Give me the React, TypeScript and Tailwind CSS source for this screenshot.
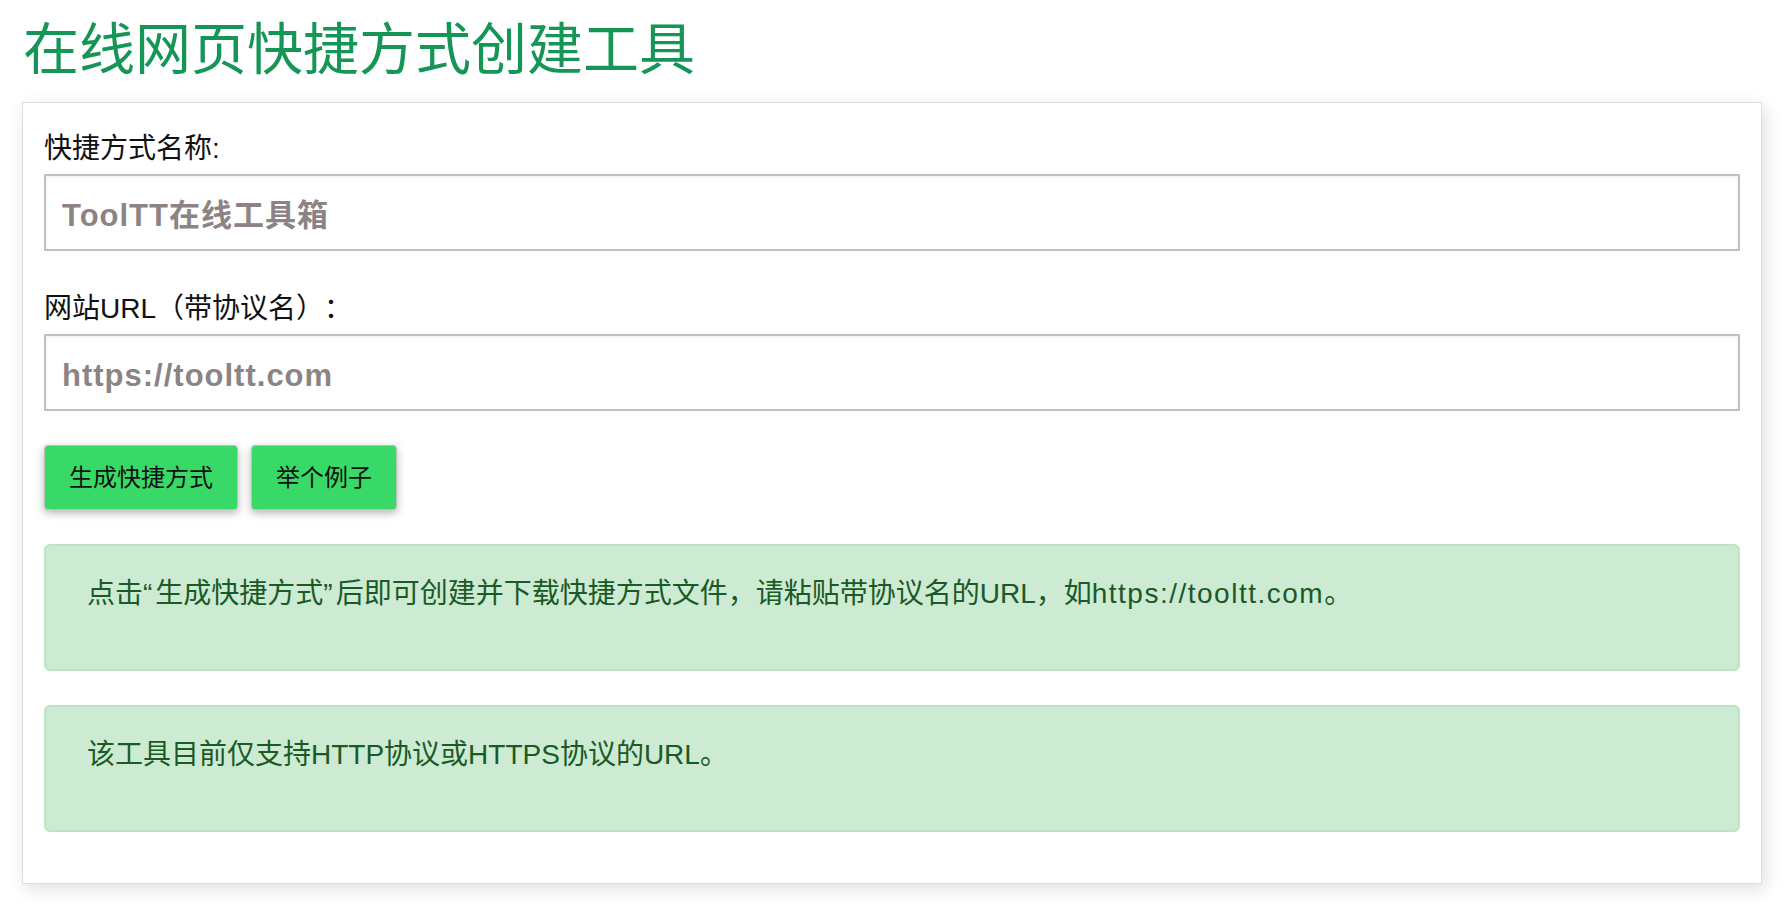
import React from "react";

const FONT = { fontFamily: '"Liberation Sans", "Noto Sans CJK SC", sans-serif' };

export default function App() {
  return (
    <div className="min-h-screen bg-white px-[22px] pt-[22px] pb-[26px] [text-spacing-trim:space-all]" style={FONT}>
      <h1 className="text-[56px] leading-[56px] text-[#159656] font-normal pl-[1px]">在线网页快捷方式创建工具</h1>
      <div className="mt-[24px] border border-[#dedede] bg-white shadow-[3px_5px_16px_rgba(0,0,0,0.13)] px-[21px] pt-[31px] pb-[51px]">
        <label className="block h-[30px] text-[28px] leading-[30px] text-[#111]">快捷方式名称:</label>
        <input
          type="text"
          placeholder="ToolTT在线工具箱"
          className="mt-[10px] block w-full h-[77px] border-2 border-[#c0c0c0] px-[16px] pt-[6px] text-[31px] font-bold tracking-[1px] text-[#333] placeholder:text-[#8c8484] outline-none shadow-[inset_0_1px_3px_rgba(0,0,0,0.08)]"
        />
        <label className="mt-[43px] block h-[30px] text-[28px] leading-[30px] text-[#111]">网站URL（带协议名）：</label>
        <input
          type="text"
          placeholder="https://tooltt.com"
          className="mt-[10px] block w-full h-[77px] border-2 border-[#c0c0c0] px-[16px] pt-[6px] text-[31px] font-bold tracking-[1px] text-[#333] placeholder:text-[#8c8484] outline-none shadow-[inset_0_1px_3px_rgba(0,0,0,0.08)]"
        />
        <div className="mt-[34px] flex gap-[13px]">
          <button className="h-[65px] px-[24px] bg-[#39d967] border border-[#b8c4bb] rounded-[4px] text-[24px] text-[#111] shadow-[0_3px_8px_rgba(0,0,0,0.3)]">生成快捷方式</button>
          <button className="h-[65px] px-[24px] bg-[#39d967] border border-[#b8c4bb] rounded-[4px] text-[24px] text-[#111] shadow-[0_3px_8px_rgba(0,0,0,0.3)]">举个例子</button>
        </div>
        <div className="mt-[34px] h-[127px] rounded-[6px] border-2 border-[#bde3c6] bg-[#cdead3] pl-[41px] pt-[33px] text-[28px] leading-[30px] text-[#1a5a26]">
          点击<span className="tracking-[3px]">“</span>生成快捷方式<span className="tracking-[3px]">”</span>后即可创建并下载快捷方式文件，请粘贴带协议名的URL，如<span className="tracking-[1.5px]">https://tooltt.com</span>。
        </div>
        <div className="mt-[34px] h-[127px] rounded-[6px] border-2 border-[#bde3c6] bg-[#cdead3] pl-[41px] pt-[33px] text-[28px] leading-[30px] text-[#1a5a26]">
          该工具目前仅支持HTTP协议或HTTPS协议的URL。
        </div>
      </div>
    </div>
  );
}
